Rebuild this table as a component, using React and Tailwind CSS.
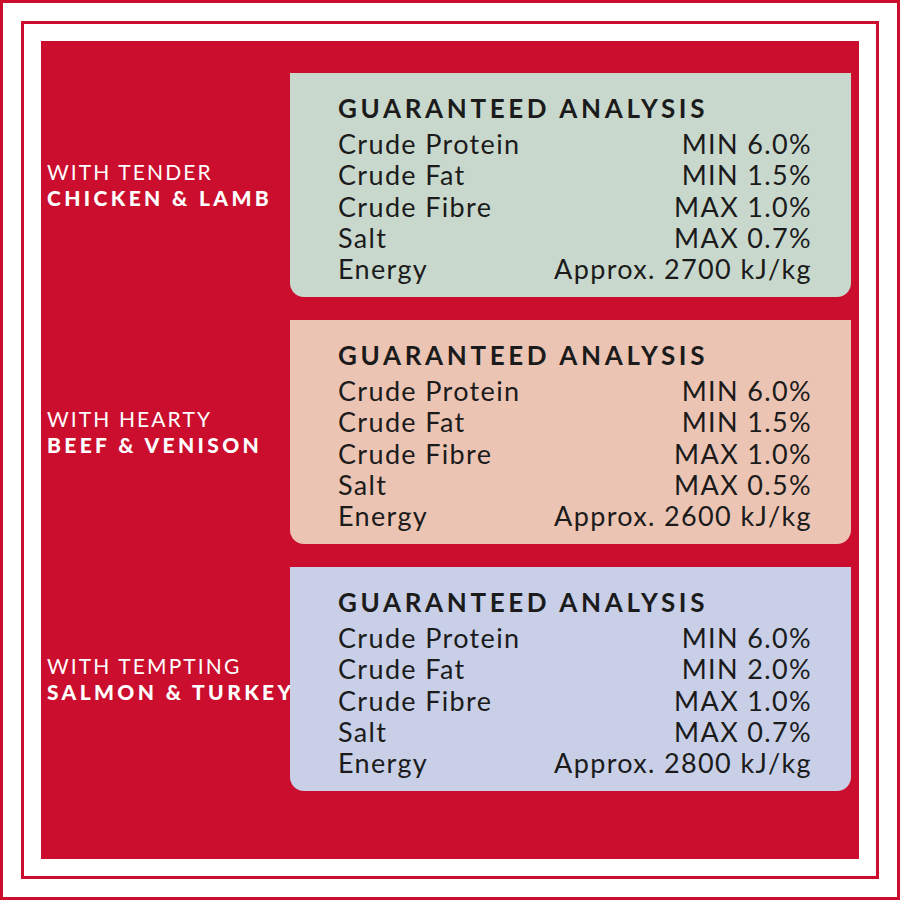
const recipes = [
  {
    lead: 'WITH TENDER',
    name: 'CHICKEN & LAMB',
    bg: 'bg-[#c9d8cd]',
    rows: [
      ['Crude Protein', 'MIN 6.0%'],
      ['Crude Fat', 'MIN 1.5%'],
      ['Crude Fibre', 'MAX 1.0%'],
      ['Salt', 'MAX 0.7%'],
      ['Energy', 'Approx. 2700 kJ/kg'],
    ],
  },
  {
    lead: 'WITH HEARTY',
    name: 'BEEF & VENISON',
    bg: 'bg-[#ecc4b3]',
    rows: [
      ['Crude Protein', 'MIN 6.0%'],
      ['Crude Fat', 'MIN 1.5%'],
      ['Crude Fibre', 'MAX 1.0%'],
      ['Salt', 'MAX 0.5%'],
      ['Energy', 'Approx. 2600 kJ/kg'],
    ],
  },
  {
    lead: 'WITH TEMPTING',
    name: 'SALMON & TURKEY',
    bg: 'bg-[#c8cfe7]',
    rows: [
      ['Crude Protein', 'MIN 6.0%'],
      ['Crude Fat', 'MIN 2.0%'],
      ['Crude Fibre', 'MAX 1.0%'],
      ['Salt', 'MAX 0.7%'],
      ['Energy', 'Approx. 2800 kJ/kg'],
    ],
  },
];

const Analysis = ({ recipe }) => (
  <div className="flex items-center">
    <div className="w-[249px] shrink-0 pl-[6px] text-white text-[21px] leading-[26px] whitespace-nowrap">
      <div className="tracking-[0.1em]">{recipe.lead}</div>
      <div className="font-black tracking-[0.16em]">{recipe.name}</div>
    </div>
    <div className={`${recipe.bg} w-[561px] h-[224px] rounded-b-[14px] pl-[48px] pr-[40px] pt-[20px] text-[#1b1b1b]`}>
      <h2 className="text-[26px] font-bold tracking-[0.14em] leading-[31px] mb-[4px] whitespace-nowrap">GUARANTEED ANALYSIS</h2>
      {recipe.rows.map(([label, value]) => (
        <div key={label} className="flex justify-between text-[27px] tracking-[0.05em] leading-[31.3px]">
          <span>{label}</span>
          <span className="mr-[-1px]">{value}</span>
        </div>
      ))}
    </div>
  </div>
);

export default function App() {
  return (
    <div className="w-[900px] h-[900px] bg-white border-[3px] border-[#cb0e2e] p-[18px] font-['Lato',sans-serif]">
      <div className="h-full border-[3px] border-[#cb0e2e] p-[17px]">
        <div className="h-full bg-[#cb0e2e] pt-[32px] flex flex-col gap-[23px]">
          {recipes.map((r) => (
            <Analysis key={r.name} recipe={r} />
          ))}
        </div>
      </div>
    </div>
  );
}
